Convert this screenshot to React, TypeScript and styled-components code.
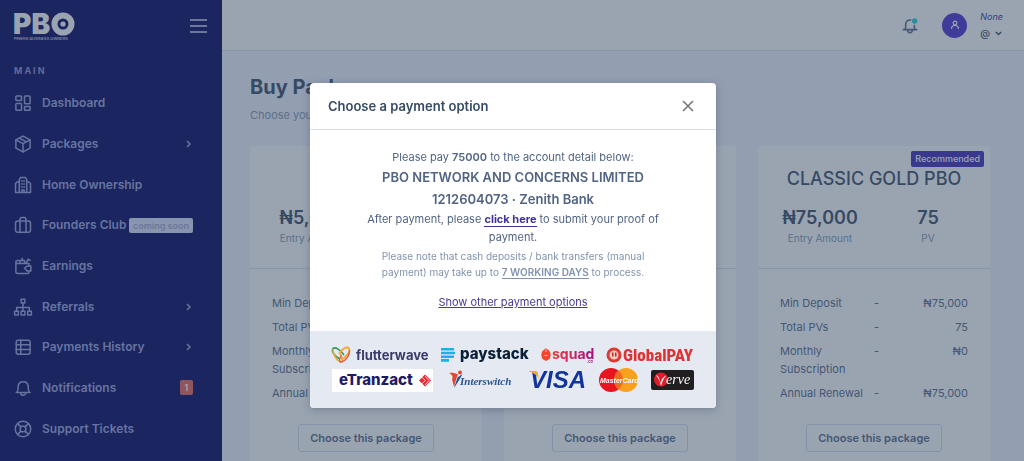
import React from 'react';
import styled, { createGlobalStyle } from 'styled-components';

const color = {
  navy: '#00005b',
  heading: '#364a63',
  text: '#526484',
  soft: '#8094ae',
  border: '#dbdfea',
  primary: '#4a2cd0',
};

const GlobalStyle = createGlobalStyle`
  *, *::before, *::after { box-sizing: border-box; }
  body {
    margin: 0;
    overflow: hidden;
    background: #f1f2ff;
    color: ${color.text};
    font: 400 11px/18px Inter, "Liberation Sans", sans-serif;
  }
  h1, h2, h3, p, ul { margin: 0; padding: 0; }
  ul { list-style: none; }
  a { color: inherit; text-decoration: none; }
  button { font: inherit; color: inherit; background: none; border: 0; padding: 0; cursor: pointer; }
  svg { display: block; flex: none; overflow: visible; }
`;

const Shell = styled.div`
  display: flex;
  height: 100vh;
  overflow: hidden;
`;

/* Sidebar */
const Sidebar = styled.aside`
  flex: none;
  width: 222px;
  background: ${color.navy};
  color: #979edd;
`;
const Brand = styled.div`
  display: flex;
  align-items: center;
  justify-content: space-between;
  height: 52px;
  padding: 0 14px;
`;
const Tagline = styled.text`
  font: 400 4px Inter, sans-serif;
`;
const BrandText = styled.text`
  font: 900 28px Inter, sans-serif;
`;
const MenuTitle = styled.h2`
  padding: 10px 14px 3px;
  font-size: 9px;
  line-height: 18px;
  font-weight: 700;
  letter-spacing: 2px;
  color: #8a8cd0;
`;
const Menu = styled.ul`
  display: grid;
  grid-template-columns: minmax(0, 1fr);
  grid-auto-rows: 1fr;
  height: 366px;
`;
const MenuLink = styled.a`
  display: flex;
  align-items: center;
  height: 100%;
  padding: 0 29px 0 14px;
  font-size: 12px;
  font-weight: 600;
  white-space: nowrap;
`;
const MenuIcon = styled.span`
  flex: none;
  width: 28px;
`;
const Push = styled.span`
  margin-left: auto;
`;
const SoonTag = styled.span`
  margin-left: auto;
  padding: 0 4px;
  border-radius: 2px;
  background: #dcdef8;
  color: #a0a7d2;
  font-size: 9px;
  line-height: 15px;
  font-weight: 600;
`;
const CountTag = styled.span`
  margin-left: auto;
  width: 13px;
  border-radius: 2px;
  background: #ea6259;
  color: #fff;
  font-size: 9px;
  line-height: 15px;
  text-align: center;
`;

/* Page */
const Page = styled.div`
  flex: 1;
  min-width: 0;
`;
const Topbar = styled.header`
  display: flex;
  align-items: center;
  justify-content: flex-end;
  height: 51px;
  padding-right: 21px;
  background: #fff;
  border-bottom: 1px solid #e3e5f5;
  color: ${color.text};
`;
const BellButton = styled.button`
  margin-right: 24px;
`;
const Avatar = styled.span`
  display: grid;
  place-items: center;
  width: 25px;
  height: 25px;
  margin-right: 13px;
  border-radius: 50%;
  background: ${color.primary};
`;
const User = styled.button`
  display: flex;
  align-items: center;
  text-align: left;
`;
const UserInfo = styled.span`
  display: grid;
  line-height: 16px;
`;
const UserStatus = styled.em`
  font-size: 9px;
  color: #38309a;
`;
const UserName = styled.span`
  display: flex;
  align-items: center;
  gap: 5px;
  font-size: 10px;
  font-weight: 500;
  color: ${color.heading};
`;
const Content = styled.main`
  padding: 22px 34px 0 28px;
`;
const PageTitle = styled.h1`
  font-size: 20px;
  line-height: 28px;
  font-weight: 700;
  color: ${color.heading};
`;
const Lead = styled.p`
  margin-top: 5px;
  color: ${color.soft};
`;
const Cards = styled.div`
  display: grid;
  grid-template-columns: repeat(3, 1fr);
  gap: 22px;
  margin-top: 22px;
`;
const Card = styled.article`
  position: relative;
  background: #fff;
  border-radius: 3px;
`;
const CardHead = styled.div`
  padding: 21px 8px 22px;
  border-bottom: 1px solid ${color.border};
  text-align: center;
`;
const CardTitle = styled.h3`
  font-size: 18px;
  line-height: 24px;
  font-weight: 500;
  color: ${color.heading};
`;
const Figures = styled.div`
  display: grid;
  grid-template-columns: 1fr 1fr;
  margin-top: 15px;
`;
const Amount = styled.div`
  font-size: 18px;
  line-height: 24px;
  font-weight: 600;
  color: ${color.heading};
`;
const Caption = styled.div`
  font-size: 10px;
  line-height: 16px;
  color: ${color.soft};
`;
const Ribbon = styled.span`
  position: absolute;
  top: 5px;
  right: 6px;
  padding: 0 4px;
  border-radius: 2px;
  background: #3c24b8;
  color: #fff;
  font-size: 9px;
  line-height: 16px;
  font-weight: 500;
`;
const CardBody = styled.div`
  padding: 22px 22px 24px;
  text-align: center;
`;
const Terms = styled.table`
  width: 100%;
  border-collapse: collapse;
  text-align: left;
`;
const TermName = styled.th`
  width: 50%;
  padding: 3px 6px 3px 0;
  font-size: 11px;
  font-weight: 400;
  vertical-align: top;
`;
const TermDash = styled.td`
  padding: 3px 0;
  vertical-align: top;
`;
const TermValue = styled.td`
  padding: 3px 0;
  text-align: right;
  vertical-align: top;
`;
const ChooseButton = styled.button`
  width: 136px;
  height: 28px;
  margin-top: 19px;
  border: 1px solid #d3d8e8;
  border-radius: 3px;
  font-size: 11px;
  font-weight: 600;
`;

/* Dialog */
const Backdrop = styled.div`
  position: fixed;
  inset: 0;
  display: flex;
  justify-content: center;
  align-items: flex-start;
  padding: 83px 0 0 2px;
  background: rgba(54, 74, 99, 0.5);
`;
const Dialog = styled.section`
  width: 406px;
  max-width: 100%;
  overflow: hidden;
  border-radius: 4px;
  background: #fff;
  box-shadow: 0 2px 8px rgba(43, 55, 72, 0.3);
`;
const DialogHead = styled.div`
  display: flex;
  align-items: center;
  justify-content: space-between;
  height: 47px;
  padding: 0 22px 0 18px;
  border-bottom: 1px solid ${color.border};
`;
const DialogTitle = styled.h2`
  font-size: 13px;
  line-height: 18px;
  font-weight: 600;
  color: ${color.heading};
`;
const DialogBody = styled.div`
  padding: 18px 54px 20px;
  text-align: center;
`;
const Account = styled.p`
  font-size: 13px;
  line-height: 22px;
  font-weight: 600;
`;
const Note = styled.p`
  margin-top: 2px;
  font-size: 10px;
  line-height: 16px;
  color: ${color.soft};
`;
const Strong = styled.strong<{ $lined?: boolean }>`
  font-weight: 600;
  border-bottom: ${(p) => (p.$lined ? '1px solid currentColor' : '0')};
`;
const ProofLink = styled.a`
  font-weight: 700;
  color: #43309a;
  border-bottom: 1px solid currentColor;
`;
const OtherOptions = styled.button`
  margin-top: 13px;
  color: #4b3a96;
  text-decoration: underline;
`;
const Providers = styled.div`
  display: grid;
  gap: 3px;
  padding: 13px 22px 17px;
  background: #e5e9f2;
`;
const ProviderRow = styled.div`
  display: flex;
  align-items: center;
  justify-content: space-between;
  height: 22px;
`;
const LogoText = styled.text<{ $size: number; $weight: number; $italic?: boolean; $font?: string }>`
  font-size: ${(p) => p.$size}px;
  font-weight: ${(p) => p.$weight};
  font-style: ${(p) => (p.$italic ? 'italic' : 'normal')};
  font-family: ${(p) => p.$font || 'Inter'}, sans-serif;
`;

const Glyph = ({ children, size = 18 }: { children: React.ReactNode; size?: number }) => (
  <svg width={size} height={size} viewBox="0 0 24 24" fill="none" stroke="currentColor" strokeWidth="2" strokeLinecap="round" strokeLinejoin="round" aria-hidden="true">
    {children}
  </svg>
);

const icons = {
  dashboard: (
    <>
      <rect x="2.500" y="2.500" width="7.500" height="6" rx="1" />
      <rect x="14" y="2.500" width="7.500" height="10.500" rx="1" />
      <rect x="2.500" y="12.500" width="7.500" height="9" rx="1" />
      <rect x="14" y="16.500" width="7.500" height="5" rx="1" />
    </>
  ),
  box: (
    <>
      <path d="M12 1.500 21.500 6.500v11L12 22.500 2.500 17.500v-11z" />
      <path d="M2.500 6.500 12 11.500l9.500-5M12 11.500v11M7 4.200l9.700 5" />
    </>
  ),
  building: (
    <>
      <path d="M7 22V4.500L9 2h6l2 2.500V22M7 8H4L2 10v12h20V10l-2-2h-3" />
      <path d="M10 6.500h1M13 6.500h1M10 10.500h1M13 10.500h1M10 14.500h1M13 14.500h1M10.500 22v-3.500h3V22" />
    </>
  ),
  briefcase: (
    <>
      <rect x="2" y="6.500" width="20" height="15" rx="3" />
      <path d="M8 21.500V4.500a2.500 2.500 0 0 1 2.500-2.500h3A2.500 2.500 0 0 1 16 4.500v17" />
    </>
  ),
  wallet: (
    <>
      <path d="M20 11V8.500H4.500a2 2 0 0 1 0-4H8M2.500 6.500V20a2 2 0 0 0 2 2H18a2 2 0 0 0 2-2v-1.500" />
      <path d="M22.500 12h-5l-3.500 3 3.500 3.500h5zM8 8V4.500h6V8M11 4V1.500M16 8l3-5 2.500 1.500" />
    </>
  ),
  tree: (
    <>
      <rect x="9.500" y="1.500" width="5" height="5" />
      <rect x="0.800" y="17.500" width="5" height="5" />
      <rect x="9.500" y="17.500" width="5" height="5" />
      <rect x="18.200" y="17.500" width="5" height="5" />
      <path d="M12 6.500v11M3.500 17v-4.500h17V17" />
    </>
  ),
  table: (
    <>
      <rect x="3" y="3" width="18.500" height="18.500" rx="2.500" />
      <path d="M3 9h18.500M3 15.200h18.500M9 3v18.500" />
    </>
  ),
  bell: (
    <>
      <path d="M3 18h18.500c-2-1.500-2.500-3-2.500-5.500V9.500a6.800 6.800 0 0 0-13.500 0v3C5.500 15 5 16.500 3 18z" />
      <path d="M9 18.500a3.200 3.200 0 0 0 6.400 0" />
    </>
  ),
  support: (
    <>
      <circle cx="12" cy="12" r="10.300" />
      <rect x="8.300" y="8.300" width="7.400" height="7.400" rx="2.500" />
      <path d="m4.800 4.800 4.400 4.400M14.800 14.800l4.400 4.400M19.200 4.800l-4.400 4.400M9.200 14.800l-4.400 4.400" />
    </>
  ),
};

type MenuEntry = { label: string; icon: keyof typeof icons; more?: boolean; soon?: boolean; count?: number };
const menu: MenuEntry[] = [
  { label: 'Dashboard', icon: 'dashboard' },
  { label: 'Packages', icon: 'box', more: true },
  { label: 'Home Ownership', icon: 'building' },
  { label: 'Founders Club', icon: 'briefcase', soon: true },
  { label: 'Earnings', icon: 'wallet' },
  { label: 'Referrals', icon: 'tree', more: true },
  { label: 'Payments History', icon: 'table', more: true },
  { label: 'Notifications', icon: 'bell', count: 1 },
  { label: 'Support Tickets', icon: 'support' },
];

const packages = [
  { name: 'STARTER', amount: '₦5,000', pv: '5', recommended: false },
  { name: 'CLASSIC', amount: '₦25,000', pv: '25', recommended: false },
  { name: 'CLASSIC GOLD PBO', amount: '₦75,000', pv: '75', recommended: true },
];

const PboLogo = () => (
  <svg width="62" height="30" viewBox="0 0 62 30" fill="#fff" role="img" aria-label="PBO">
    <BrandText x="-1" y="23">PB</BrandText>
    <circle cx="49" cy="13" r="8.500" fill="none" stroke="#fff" strokeWidth="6" />
    <circle cx="49" cy="13" r="2.600" />
    <Tagline x="0" y="29">PAWAN BUSINESS OWNERS</Tagline>
  </svg>
);

const Flutterwave = () => (
  <svg width="99" height="18" viewBox="0 0 99 18" fill="none" role="img" aria-label="flutterwave">
    <path d="M8 13C3 11-1 5 1 2.500 3 .5 9 4 12 9" stroke="#2f9a5f" strokeWidth="1.600" />
    <path d="M1 3c-.5 5 4 12 8 13 3 .5 1-5-1-8" stroke="#f0a63a" strokeWidth="1.600" />
    <path d="M7 8C9 3 15 0 17 2.500c2 3-3 9-8 11" stroke="#f5a72c" strokeWidth="1.800" />
    <path d="M17.500 4c.5 5-3 10-8 12-3 .5-2-4 0-7" stroke="#e0554b" strokeWidth="1.300" />
    <LogoText x="24" y="14" $size={13} $weight={700} fill="#3b3a68">flutterwave</LogoText>
  </svg>
);

const Paystack = () => (
  <svg width="91" height="18" viewBox="0 0 91 18" role="img" aria-label="paystack">
    <path d="M0 2h13v2.600H0zM0 5.700h14v2.600H0zM0 9.400h13v2.600H0zM0 13.100h8v2.600H0z" fill="#12b5e5" />
    <LogoText x="19" y="13" $size={15} $weight={800} fill="#0b1f38">paystack</LogoText>
  </svg>
);

const Squad = () => (
  <svg width="55" height="18" viewBox="0 0 55 18" role="img" aria-label="squad">
    <defs>
      <linearGradient id="squad" x1="0" x2="1">
        <stop offset="0" stopColor="#ee3a3c" />
        <stop offset="1" stopColor="#a3127e" />
      </linearGradient>
    </defs>
    <path d="M5 2 8.500 5C10 7 10 11 8.500 13L5 15 1.500 13C0 11 0 7 1.500 5z" fill="#f0482f" />
    <path d="M5 2v4M3.500 9.500h3" stroke="#fbb39a" strokeWidth="1" />
    <LogoText x="11" y="13" $size={14} $weight={700} fill="url(#squad)">squad</LogoText>
    <LogoText x="46" y="17" $size={4} $weight={600} fill="#a3127e">.co</LogoText>
  </svg>
);

const GlobalPay = () => (
  <svg width="88" height="18" viewBox="0 0 88 18" role="img" aria-label="GlobalPAY">
    <circle cx="8" cy="9" r="7.500" fill="#dc3a35" />
    <circle cx="8" cy="9" r="4.500" fill="#f4c9c2" />
    <path d="M6 6.500v4h1.500v-4zM9 6.500v4h1.500v-4z" fill="#b5302c" />
    <LogoText x="17" y="15" $size={17} $weight={800} $font="'Roboto Condensed'" fill="#dc3432">GlobalPAY</LogoText>
  </svg>
);

const ETranzact = () => (
  <svg width="101" height="23" viewBox="0 0 101 23" role="img" aria-label="eTranzact">
    <rect width="101" height="23" fill="#fff" />
    <LogoText x="7" y="16" $size={15} $weight={800} fill="#211a66">eTranzact</LogoText>
    <path d="m93 5.500 6 6-6 6-6-6z" fill="#e02a2c" />
    <path d="m89.500 8 4 3.500-4 3.500M93 7l4 4.500-4 4.500" fill="none" stroke="#fff" strokeWidth="0.800" />
  </svg>
);

const Interswitch = () => (
  <svg width="68" height="20" viewBox="-2 0 68 20" role="img" aria-label="Interswitch">
    <path d="M0 3c3-.5 6 0 9 1.500L7.500 8 5 17 3 9C4.500 7 3 4.500 0 3z" fill="#e4472f" />
    <path d="M13.500 4 8.500 7.500 5 18l5.500-8.500z" fill="#23528f" />
    <circle cx="11" cy="2.500" r="2" fill="#e4472f" />
    <LogoText x="11" y="15" $size={11} $weight={600} $italic $font="'Liberation Serif'" fill="#2b5590">Interswitch</LogoText>
  </svg>
);

const Visa = () => (
  <svg width="57" height="20" viewBox="0 0 57 20" role="img" aria-label="VISA">
    <LogoText x="2" y="18" $size={24} $weight={700} $italic $font="'Liberation Sans'" fill="#13349b">VISA</LogoText>
    <path d="M1 1h6c2 0 3 1 3 3l1 5C9 5 5 2.500 1 1.500z" fill="#f2a62b" />
  </svg>
);

const MasterCard = () => (
  <svg width="39" height="24" viewBox="0 0 39 24" role="img" aria-label="MasterCard">
    <circle cx="12" cy="12" r="12" fill="#e8141f" />
    <circle cx="27" cy="12" r="12" fill="#f9a11c" />
    <path d="M19.500 2.600a12 12 0 0 1 0 18.800 12 12 0 0 1 0-18.800z" fill="#ef6a1c" />
    <LogoText x="1" y="15" $size={7} $weight={700} $italic $font="'Liberation Sans'" fill="#fff">MasterCard</LogoText>
  </svg>
);

const Verve = () => (
  <svg width="43" height="20" viewBox="0 0 43 20" role="img" aria-label="Verve">
    <rect width="43" height="20" rx="2" fill="#211f20" />
    <circle cx="10" cy="9.500" r="7" fill="#e01f2c" />
    <path d="M5 5.500c2 0 3 1.500 4.500 7.500 1-4 3-6.500 6-7.500-3 2.500-4 6-5.500 10.500C9 12 8 8 5 5.500z" fill="#fff" />
    <LogoText x="15" y="14" $size={14} $weight={400} $italic $font="'Liberation Serif'" fill="#fff">erve</LogoText>
  </svg>
);

const MenuItem = ({ label, icon, more, soon, count }: MenuEntry) => (
  <li>
    <MenuLink href="#">
      <MenuIcon><Glyph>{icons[icon]}</Glyph></MenuIcon>
      {label}
      {soon && <SoonTag>coming soon</SoonTag>}
      {more && (
        <Push>
          <svg width="8" height="10" viewBox="0 0 8 10" fill="none" stroke="currentColor" strokeWidth="1.500"><path d="m2 2 3 3-3 3" /></svg>
        </Push>
      )}
      {count && <CountTag>{count}</CountTag>}
    </MenuLink>
  </li>
);

const PackageCard = ({ name, amount, pv, recommended }: (typeof packages)[number]) => (
  <Card>
    {recommended && <Ribbon>Recommended</Ribbon>}
    <CardHead>
      <CardTitle>{name}</CardTitle>
      <Figures>
        <div>
          <Amount>{amount}</Amount>
          <Caption>Entry Amount</Caption>
        </div>
        <div>
          <Amount>{pv}</Amount>
          <Caption>PV</Caption>
        </div>
      </Figures>
    </CardHead>
    <CardBody>
      <Terms>
        <tbody>
          {[['Min Deposit', amount], ['Total PVs', pv], ['Monthly Subscription', '₦0'], ['Annual Renewal', amount]].map(([term, value]) => (
            <tr key={term}>
              <TermName scope="row">{term}</TermName>
              <TermDash>-</TermDash>
              <TermValue>{value}</TermValue>
            </tr>
          ))}
        </tbody>
      </Terms>
      <ChooseButton type="button">Choose this package</ChooseButton>
    </CardBody>
  </Card>
);

export default function App() {
  return (
    <>
      <GlobalStyle />
      <Shell>
        <Sidebar>
          <Brand>
            <PboLogo />
            <button type="button" aria-label="Toggle menu">
              <svg width="19" height="14" viewBox="0 0 19 14" stroke="#dcdcf5" strokeWidth="1.300"><path d="M1 1h17M1 7h17M1 13h17" /></svg>
            </button>
          </Brand>
          <nav>
            <MenuTitle>MAIN</MenuTitle>
            <Menu>{menu.map((entry) => <MenuItem key={entry.label} {...entry} />)}</Menu>
          </nav>
        </Sidebar>
        <Page>
          <Topbar>
            <BellButton type="button" aria-label="Notifications">
              <svg width="16" height="18" viewBox="0 0 24 26" fill="none" stroke="currentColor" strokeWidth="2.400" strokeLinecap="round">
                <path d="M2 20h20M4.500 20c1.500-2 1-5 1-8A6.500 6.500 0 0 1 13 5.500M18.500 14c0 3 0 4.500 1 6M8.500 21a3.500 3.500 0 0 0 7 0" />
                <circle cx="19" cy="7" r="4" fill="#1ed0dc" stroke="none" />
              </svg>
            </BellButton>
            <User type="button">
              <Avatar>
                <svg width="10" height="10" viewBox="0 0 10 10" fill="none" stroke="#fff" strokeWidth="1.200"><circle cx="5" cy="3" r="1.800" /><path d="M1.500 9c0-2.500 1.500-3.500 3.500-3.500S8.500 6.500 8.500 9" /></svg>
              </Avatar>
              <UserInfo>
                <UserStatus>None</UserStatus>
                <UserName>
                  @
                  <svg width="7" height="5" viewBox="0 0 7 5" fill="none" stroke="currentColor" strokeWidth="1.500"><path d="m.8 1 2.700 2.500L6.200 1" /></svg>
                </UserName>
              </UserInfo>
            </User>
          </Topbar>
          <Content>
            <PageTitle>Buy Packages</PageTitle>
            <Lead>Choose your package</Lead>
            <Cards>{packages.map((item) => <PackageCard key={item.name} {...item} />)}</Cards>
          </Content>
        </Page>
      </Shell>
      <Backdrop>
        <Dialog role="dialog" aria-modal="true" aria-labelledby="payment-title">
          <DialogHead>
            <DialogTitle id="payment-title">Choose a payment option</DialogTitle>
            <button type="button" aria-label="Close">
              <svg width="12" height="12" viewBox="0 0 12 12" stroke="#777" strokeWidth="1.600"><path d="m1 1 10 10M11 1 1 11" /></svg>
            </button>
          </DialogHead>
          <DialogBody>
            <p>Please pay <Strong>75000</Strong> to the account detail below:</p>
            <Account>PBO NETWORK AND CONCERNS LIMITED</Account>
            <Account>1212604073 · Zenith Bank</Account>
            <p>After payment, please <ProofLink href="#">click here</ProofLink> to submit your proof of payment.</p>
            <Note>
              Please note that cash deposits / bank transfers (manual payment) may take up to <Strong $lined>7 WORKING DAYS</Strong> to process.
            </Note>
            <OtherOptions type="button">Show other payment options</OtherOptions>
          </DialogBody>
          <Providers>
            <ProviderRow>
              <Flutterwave />
              <Paystack />
              <Squad />
              <GlobalPay />
            </ProviderRow>
            <ProviderRow>
              <ETranzact />
              <Interswitch />
              <Visa />
              <MasterCard />
              <Verve />
            </ProviderRow>
          </Providers>
        </Dialog>
      </Backdrop>
    </>
  );
}
